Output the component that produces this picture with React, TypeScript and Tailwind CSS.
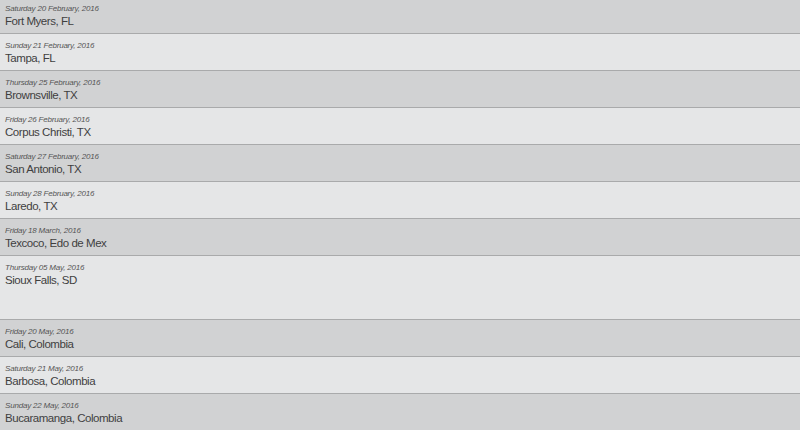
const stops = [
    { date: 'Saturday 20 February, 2016', city: 'Fort Myers, FL' },
    { date: 'Sunday 21 February, 2016', city: 'Tampa, FL' },
    { date: 'Thursday 25 February, 2016', city: 'Brownsville, TX' },
    { date: 'Friday 26 February, 2016', city: 'Corpus Christi, TX' },
    { date: 'Saturday 27 February, 2016', city: 'San Antonio, TX' },
    { date: 'Sunday 28 February, 2016', city: 'Laredo, TX' },
    { date: 'Friday 18 March, 2016', city: 'Texcoco, Edo de Mex' },
    { date: 'Thursday 05 May, 2016', city: 'Sioux Falls, SD', tall: true },
    { date: 'Friday 20 May, 2016', city: 'Cali, Colombia' },
    { date: 'Saturday 21 May, 2016', city: 'Barbosa, Colombia' },
    { date: 'Sunday 22 May, 2016', city: 'Bucaramanga, Colombia' },
]

function App() {
    return (
        <div className="w-[800px] h-[430px] overflow-hidden bg-[#d1d2d3] font-['Liberation_Sans',Arial,sans-serif]">
            <div className="-mt-[3px]">
                {stops.map((stop, i) => (
                    <div
                        key={i}
                        className={`border-b border-[#a9aaab] px-[5px] pt-[7px] ${stop.tall ? 'h-[64px]' : 'h-[37px]'} ${i % 2 === 0 ? 'bg-[#d1d2d3]' : 'bg-[#e5e6e7]'}`}
                    >
                        <p className="text-[8px] leading-[10px] italic tracking-[-0.2px] text-[#555]">{stop.date}</p>
                        <p className="text-[11.5px] leading-[14px] tracking-[-0.45px] text-[#3f3f3f]">{stop.city}</p>
                    </div>
                ))}
            </div>
        </div>
    )
}

export default App
